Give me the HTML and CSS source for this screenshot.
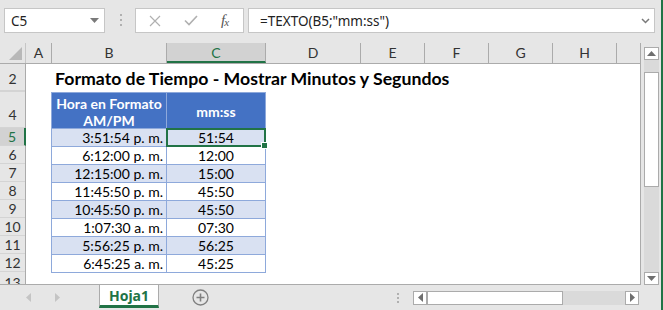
FILE: index.html
```html
<!DOCTYPE html>
<html lang="es">
<head>
    <meta charset="UTF-8">
    <meta name="viewport" content="width=device-width, initial-scale=1.0">
    <title>Hoja1 - Excel</title>
    <link rel="stylesheet" href="styles.css">
</head>
<body>
<div id="app">
    <!-- formula bar -->
    <div class="formula-bar">
        <div class="namebox">
            <span>C5</span>
            <svg width="9" height="5" viewBox="0 0 9 5"><path d="M0 0h9L4.5 5z" fill="#7a7a7a"/></svg>
        </div>
        <div class="grip"><i></i><i></i><i></i></div>
        <div class="fx-buttons">
            <svg width="12" height="12" viewBox="0 0 12 12"><path d="M1 1l10 10M11 1L1 11" stroke="#b0b0b0" stroke-width="1.2"/></svg>
            <svg width="14" height="11" viewBox="0 0 14 11"><path d="M1 5.5l4 4L13 1" stroke="#b0b0b0" stroke-width="1.6" fill="none"/></svg>
            <span class="fx">f<span>x</span></span>
        </div>
        <div class="formula">
            <span>=TEXTO(B5;"mm:ss")</span>
            <svg width="9" height="6" viewBox="0 0 9 6"><path d="M1 1l3.5 3.5L8 1" stroke="#7a7a7a" stroke-width="1.5" fill="none"/></svg>
        </div>
    </div>

    <!-- grid -->
    <div class="workarea">
        <div class="sheet">
            <div class="colheads">
                <div class="corner"><svg width="13" height="13" viewBox="0 0 13 13"><path d="M13 0v13H0z" fill="#b8b8b8"/></svg></div>
                <div class="ch w-a">A</div>
                <div class="ch w-b">B</div>
                <div class="ch w-c active">C</div>
                <div class="ch w-d">D</div>
                <div class="ch w-e">E</div>
                <div class="ch w-e">F</div>
                <div class="ch w-e">G</div>
                <div class="ch w-e">H</div>
                <div class="ch rest"></div>
            </div>
            <div class="body">
                <div class="rowheads">
                    <div class="rh r-title">2</div>
                    <div class="rh r-thin"></div>
                    <div class="rh r-head">4</div>
                    <div class="rh active">5</div>
                    <div class="rh">6</div>
                    <div class="rh">7</div>
                    <div class="rh">8</div>
                    <div class="rh">9</div>
                    <div class="rh">10</div>
                    <div class="rh">11</div>
                    <div class="rh">12</div>
                    <div class="rh r-last">13</div>
                </div>
                <div class="cells">
                    <div class="title">Formato de Tiempo - Mostrar Minutos y Segundos</div>
                    <div class="thin"></div>
                    <table class="data">
                        <tr class="head">
                            <th class="wrap"><span>Hora en Formato</span><span>AM/PM</span></th>
                            <th>mm:ss</th>
                        </tr>
                        <tr class="band"><td>3:51:54 p. m.</td><td class="sel">51:54</td></tr>
                        <tr><td>6:12:00 p. m.</td><td>12:00</td></tr>
                        <tr class="band"><td>12:15:00 p. m.</td><td>15:00</td></tr>
                        <tr><td>11:45:50 p. m.</td><td>45:50</td></tr>
                        <tr class="band"><td>10:45:50 p. m.</td><td>45:50</td></tr>
                        <tr><td>1:07:30 a. m.</td><td>07:30</td></tr>
                        <tr class="band"><td>5:56:25 p. m.</td><td>56:25</td></tr>
                        <tr><td>6:45:25 a. m.</td><td>45:25</td></tr>
                    </table>
                </div>
            </div>
        </div>
        <div class="vscroll">
            <div class="sbtn"><svg width="9" height="5" viewBox="0 0 9 5"><path d="M0 5h9L4.5 0z" fill="#6f6f6f"/></svg></div>
            <div class="vtrack"><div class="vthumb"></div></div>
            <div class="sbtn"><svg width="9" height="5" viewBox="0 0 9 5"><path d="M0 0h9L4.5 5z" fill="#6f6f6f"/></svg></div>
        </div>
    </div>

    <!-- sheet tabs -->
    <div class="tabbar">
        <div class="nav">
            <svg width="5" height="9" viewBox="0 0 5 9"><path d="M5 0v9L0 4.5z" fill="#c4c4c4"/></svg>
            <svg width="5" height="9" viewBox="0 0 5 9"><path d="M0 0v9L5 4.5z" fill="#c4c4c4"/></svg>
        </div>
        <div class="tab">Hoja1</div>
        <div class="add">
            <svg width="17" height="17" viewBox="0 0 17 17"><circle cx="8.5" cy="8.5" r="7.5" fill="none" stroke="#808080" stroke-width="1.3"/><path d="M8.5 4.5v8M4.5 8.5h8" stroke="#808080" stroke-width="1.6"/></svg>
        </div>
        <div class="grip small"><i></i><i></i><i></i></div>
        <div class="hscroll">
            <div class="hbtn"><svg width="5" height="9" viewBox="0 0 5 9"><path d="M5 0v9L0 4.5z" fill="#6f6f6f"/></svg></div>
            <div class="hthumb"></div>
            <div class="htrack"></div>
            <div class="hbtn"><svg width="5" height="9" viewBox="0 0 5 9"><path d="M0 0v9L5 4.5z" fill="#6f6f6f"/></svg></div>
        </div>
    </div>
</div>
</body>
</html>
```

FILE: styles.css
```css
*{
    box-sizing: border-box;
}
body{
    margin: 0;
    padding: 0;
    font-family: "Noto Sans", sans-serif;
    background: #e6e6e6;
}
#app{
    width: 663px;
    height: 310px;
    background: #e6e6e6;
    border-right: 2px solid #217346;
    overflow: hidden;
}

/* formula bar */
.formula-bar{
    height: 43px;
    display: flex;
    align-items: flex-start;
    padding-top: 8px;
}
.namebox{
    margin-left: 4px;
    width: 101px;
    height: 25px;
    background: #fff;
    border: 1px solid #c6c6c6;
    display: flex;
    align-items: center;
    justify-content: space-between;
    padding: 0 5px 0 6px;
    font-size: 13.5px;
    color: #222;
}
.grip{
    display: flex;
    flex-direction: column;
    gap: 3px;
    margin-left: 15px;
    padding-top: 6px;
}
.grip i{
    display: block;
    width: 2px;
    height: 2px;
    background: #b0b0b0;
}
.fx-buttons{
    margin-left: 13px;
    width: 109px;
    height: 25px;
    background: #fff;
    border: 1px solid #c6c6c6;
    display: flex;
    align-items: center;
    gap: 23px;
    padding-left: 13px;
}
.fx{
    font-family: "Liberation Serif", serif;
    font-style: italic;
    font-size: 15px;
    color: #555;
    letter-spacing: -1px;
}
.fx span{
    font-size: 11px;
    position: relative;
    top: 1px;
}
.formula{
    margin-left: 4px;
    width: 407px;
    height: 25px;
    background: #fff;
    border: 1px solid #c6c6c6;
    display: flex;
    align-items: center;
    justify-content: space-between;
    padding: 0 4px 0 11px;
    font-size: 13.5px;
    color: #222;
}

/* grid */
.workarea{
    display: flex;
    height: 242px;
}
.sheet{
    width: 641px;
    height: 242px;
    border-right: 1px solid #ababab;
    border-bottom: 1px solid #ababab;
    display: flex;
    flex-direction: column;
    font-family: Lato, "Noto Sans", sans-serif;
}
.colheads{
    display: flex;
    height: 21px;
    border-bottom: 1px solid #ababab;
}
.corner{
    width: 26px;
    border-right: 1px solid #c6c6c6;
    display: flex;
    align-items: flex-end;
    justify-content: flex-end;
    padding: 0 3px 3px 0;
}
.ch{
    border-right: 1px solid #ababab;
    text-align: center;
    font-size: 14px;
    line-height: 20px;
    color: #333;
}
.w-a{ width: 26px; }
.w-b{ width: 115px; }
.w-c{ width: 99px; }
.w-d{ width: 95px; }
.w-e{ width: 64px; }
.ch.rest{
    flex: 1;
    border-right: none;
}
.ch.active{
    background: #d2d2d2;
    color: #217346;
    border-bottom: 2px solid #217346;
}

.body{
    flex: 1;
    display: flex;
    overflow: hidden;
}
.rowheads{
    width: 26px;
    border-right: 1px solid #ababab;
    display: flex;
    flex-direction: column;
}
.rh{
    height: 18px;
    border-bottom: 1px solid #d4d4d4;
    font-size: 14px;
    line-height: 17px;
    text-align: center;
    color: #333;
}
.rh.r-title{
    height: 27px;
    line-height: 30px;
}
.rh.r-thin{
    height: 1px;
    border-bottom: none;
    background: #d4d4d4;
}
.rh.r-head{
    height: 36px;
    line-height: 46px;
}
.rh.r-last{
    height: 12px;
    border-bottom: none;
    line-height: 22px;
    overflow: hidden;
}
.rh.active{
    background: #d2d2d2;
    color: #217346;
    border-right: 2px solid #217346;
    margin-right: -1px;
}

.cells{
    flex: 1;
    background: #fff;
}
.title{
    height: 27px;
    padding-left: 29px;
    font-size: 17.7px;
    font-weight: bold;
    line-height: 30px;
    color: #000;
    white-space: nowrap;
}
.thin{
    height: 1px;
}
.data{
    margin-left: 25px;
    border-collapse: collapse;
    table-layout: fixed;
    font-size: 14px;
    color: #000;
}
.data th,
.data td{
    border: 1px solid #8ea9db;
    padding: 0 3px;
    height: 18px;
    line-height: 16px;
    white-space: nowrap;
}
.data th{
    background: #4472c4;
    color: #fff;
    height: 36px;
    line-height: 18px;
    font-weight: bold;
    padding-top: 2px;
}
.data th.wrap{
    padding-top: 0;
}
.data th.wrap span{
    display: block;
    line-height: 20px;
    height: 17px;
}
.data th:first-child,
.data td:first-child{
    width: 115px;
}
.data th:last-child,
.data td:last-child{
    width: 99px;
}
.data td:first-child{
    text-align: right;
}
.data td:last-child{
    text-align: center;
}
.data tr.band td{
    background: #d9e1f2;
}
.data td.sel{
    position: relative;
}
.data td.sel::after{
    content: "";
    position: absolute;
    left: -1px;
    top: -1px;
    right: -1px;
    bottom: -1px;
    border: 2px solid #217346;
}
.data td.sel::before{
    content: "";
    position: absolute;
    right: -3px;
    bottom: -3px;
    width: 5px;
    height: 5px;
    background: #217346;
    border: 1px solid #fff;
    z-index: 1;
}

/* vertical scrollbar */
.vscroll{
    width: 20px;
    padding: 4px 0 0 3px;
    display: flex;
    flex-direction: column;
}
.sbtn{
    width: 15px;
    height: 13px;
    background: #fff;
    border: 1px solid #ababab;
    display: flex;
    align-items: center;
    justify-content: center;
}
.vtrack{
    width: 15px;
    flex: 1;
    background: #dadada;
    padding-top: 12px;
}
.vthumb{
    height: 115px;
    background: #fff;
    border: 1px solid #ababab;
}

/* sheet tabs */
.tabbar{
    height: 25px;
    display: flex;
    align-items: center;
}
.nav{
    width: 99px;
    display: flex;
    gap: 24px;
    padding-left: 26px;
}
.tab{
    align-self: stretch;
    width: 60px;
    background: #fff;
    border-left: 1px solid #ababab;
    border-right: 1px solid #ababab;
    border-bottom: 3px solid #217346;
    margin-bottom: 2px;
    color: #217346;
    font-weight: bold;
    font-size: 14px;
    text-align: center;
    line-height: 21px;
}
.add{
    margin-left: 33px;
    height: 17px;
}
.grip.small{
    margin-left: 188px;
    padding-top: 0;
    gap: 2px;
}
.hscroll{
    margin-left: 14px;
    width: 226px;
    height: 14px;
    display: flex;
}
.hbtn{
    width: 14px;
    background: #fff;
    border: 1px solid #ababab;
    display: flex;
    align-items: center;
    justify-content: center;
}
.hthumb{
    width: 136px;
    background: #fff;
    border: 1px solid #ababab;
}
.htrack{
    flex: 1;
    background: #dadada;
}
```
